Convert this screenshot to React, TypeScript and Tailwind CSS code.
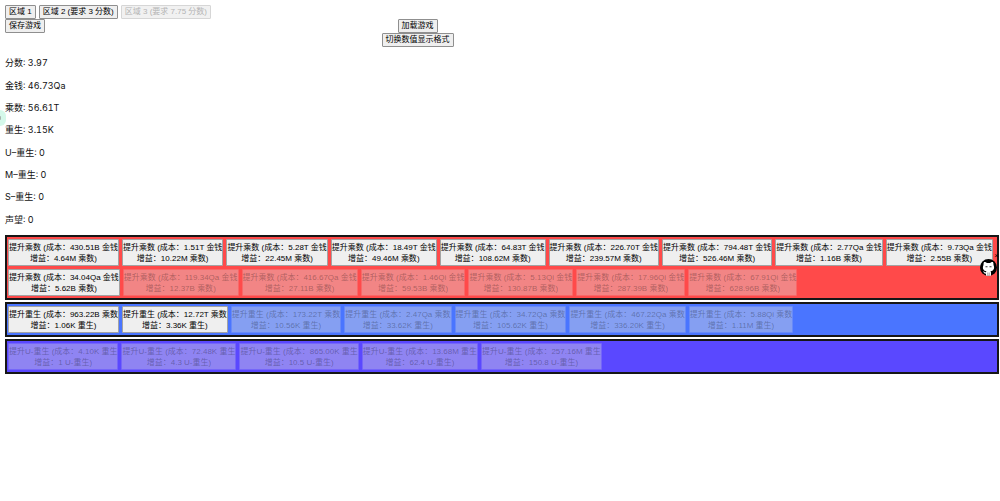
import React from "react";

type Upgrade = { cost: string; gain: string; locked?: boolean };

const multiplier: Upgrade[] = [
  { cost: "430.51B", gain: "4.64M" },
  { cost: "1.51T", gain: "10.22M" },
  { cost: "5.28T", gain: "22.45M" },
  { cost: "18.49T", gain: "49.46M" },
  { cost: "64.83T", gain: "108.62M" },
  { cost: "226.70T", gain: "239.57M" },
  { cost: "794.48T", gain: "526.46M" },
  { cost: "2.77Qa", gain: "1.16B" },
  { cost: "9.73Qa", gain: "2.55B" },
  { cost: "34.04Qa", gain: "5.62B" },
  { cost: "119.34Qa", gain: "12.37B", locked: true },
  { cost: "416.67Qa", gain: "27.11B", locked: true },
  { cost: "1.46Qi", gain: "59.53B", locked: true },
  { cost: "5.13Qi", gain: "130.87B", locked: true },
  { cost: "17.96Qi", gain: "287.39B", locked: true },
  { cost: "67.91Qi", gain: "628.96B", locked: true },
];

const rebirth: Upgrade[] = [
  { cost: "963.22B", gain: "1.06K" },
  { cost: "12.72T", gain: "3.36K" },
  { cost: "173.22T", gain: "10.56K", locked: true },
  { cost: "2.47Qa", gain: "33.62K", locked: true },
  { cost: "34.72Qa", gain: "105.62K", locked: true },
  { cost: "467.22Qa", gain: "336.20K", locked: true },
  { cost: "5.88Qi", gain: "1.11M", locked: true },
];

const ultra: Upgrade[] = [
  { cost: "4.10K", gain: "1", locked: true },
  { cost: "72.48K", gain: "4.3", locked: true },
  { cost: "865.00K", gain: "10.5", locked: true },
  { cost: "13.68M", gain: "62.4", locked: true },
  { cost: "257.16M", gain: "150.8", locked: true },
];

const stats: [string, string][] = [
  ["分数", "3.97"],
  ["金钱", "46.73Qa"],
  ["乘数", "56.61T"],
  ["重生", "3.15K"],
  ["U–重生", "0"],
  ["M–重生", "0"],
  ["S–重生", "0"],
  ["声望", "0"],
];

function SmallButton({ children, disabled }: { children: React.ReactNode; disabled?: boolean }) {
  return (
    <button
      type="button"
      disabled={disabled}
      className="whitespace-nowrap rounded-[1px] border border-[#8f8f8f] bg-[#efefef] px-[3px] text-[8px] leading-3 text-black disabled:border-[#d6d6d6] disabled:bg-[#f1f1f1] disabled:text-[#b4b4b4]"
    >
      {children}
    </button>
  );
}

function Panel({ color, name, unit, price, items }: { color: string; name: string; unit: string; price: string; items: Upgrade[] }) {
  return (
    <section className={`flex flex-wrap gap-[3px] border-2 border-[#161616] px-px py-0.5 ${color}`}>
      {items.map((u) => (
        <button
          key={u.cost}
          type="button"
          disabled={u.locked}
          className="whitespace-nowrap rounded-[1px] border border-[#a3a3a3] bg-[#efefef] pb-px pt-[2px] text-center text-[8px] leading-[11px] text-black disabled:border-[#dfdfdf]/20 disabled:bg-[#dfdfdf]/40 disabled:bg-clip-padding disabled:text-black/30"
        >
          {name} (成本：{u.cost} {price}
          <br />
          增益：{u.gain} {unit})
        </button>
      ))}
    </section>
  );
}

export default function App() {
  return (
    <div className="relative min-h-screen overflow-x-hidden bg-white pl-[5px] pr-px pt-[5px] font-['Liberation_Sans','Noto_Sans_CJK_SC',sans-serif] text-black">
      <nav className="flex gap-[3px]">
        <SmallButton>区域 1</SmallButton>
        <SmallButton>区域 2 (要求 3 分数)</SmallButton>
        <SmallButton disabled>区域 3 (要求 7.75 分数)</SmallButton>
      </nav>
      <div className="grid w-[83%] grid-cols-[1fr_auto_1fr] justify-items-start">
        <SmallButton>保存游戏</SmallButton>
        <SmallButton>加载游戏</SmallButton>
      </div>
      <div className="flex w-[83%] justify-center">
        <SmallButton>切换数值显示格式</SmallButton>
      </div>
      <div className="mt-[5px] grid min-h-[179px] grid-rows-8 items-center font-['Inter','Noto_Sans_CJK_SC',sans-serif] text-[9px] leading-3 tabular-nums text-[#111]">
        {stats.map(([k, v]) => (
          <p key={k}>
            {k}: {v}
          </p>
        ))}
      </div>
      <main className="mt-1 flex flex-col gap-0.5">
        <Panel color="bg-[#ff4a4a]" name="提升乘数" price="金钱" unit="乘数" items={multiplier} />
        <Panel color="bg-[#4a75ff]" name="提升重生" price="乘数" unit="重生" items={rebirth} />
        <Panel color="bg-[#5a48ff]" name="提升U-重生" price="重生" unit="U-重生" items={ultra} />
      </main>

      <div className="absolute left-0 top-[110px] flex h-4 w-1.5 items-center overflow-hidden rounded-r-full bg-[#d5f8ea]">
        <span className="h-1 w-px rounded-r-full bg-[#a9b5b0]" />
      </div>
      <a href="#github" aria-label="GitHub" className="absolute right-[3px] top-[259px]">
        <svg viewBox="0 0 34 34" className="h-[17px] w-[17px]">
          <circle cx="17" cy="17" r="17" fill="#000" />
          <path d="M8 6c3 0 5 1 6 2h6c1-1 3-2 6-2 1 2 1 4 1 6 3 7 0 12-6 12.500 1 1 1 2 1 3v6H12v-4c-4 0-4-2-6-5 3 0 3 3 6 2 0-1 0-1.500 1-2C7 24 4 19 7 12 7 10 7 8 8 6z" fill="#fff" />
          <path d="M11 15.500h4M19 15.500h4" stroke="#000" strokeWidth="1.600" />
          <path d="M15.500 27v6M18.500 27v6" stroke="#555" strokeWidth="1" />
        </svg>
      </a>
      <button type="button" aria-label="关闭" className="absolute right-px top-[252px] text-[8px] leading-2">
        ×
      </button>
    </div>
  );
}
